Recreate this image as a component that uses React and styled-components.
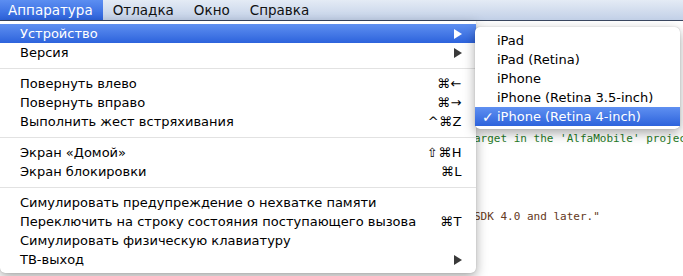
import React from 'react';
import styled, { createGlobalStyle } from 'styled-components';

const GlobalStyle = createGlobalStyle`
  html, body {
    margin: 0;
    padding: 0;
    background: #ffffff;
    overflow: hidden;
  }
`;

// only the part of Prefix.pch that shows to the right of the menu
const codeLines = [
  { text: '', kind: 'plain' },
  { text: "arget in the 'AlfaMobile' project", kind: 'comment' },
  { text: '', kind: 'plain' },
  { text: '', kind: 'plain' },
  { text: '', kind: 'plain' },
  { text: '', kind: 'plain' },
  { text: '', kind: 'plain' },
  { text: 'SDK 4.0 and later."', kind: 'pre' },
];

const mainItems = [
  { label: 'Устройство', submenu: true, active: true },
  { label: 'Версия', submenu: true },
  { divider: true },
  { label: 'Повернуть влево', shortcut: '⌘←' },
  { label: 'Повернуть вправо', shortcut: '⌘→' },
  { label: 'Выполнить жест встряхивания', shortcut: '^⌘Z' },
  { divider: true },
  { label: 'Экран «Домой»', shortcut: '⇧⌘H' },
  { label: 'Экран блокировки', shortcut: '⌘L' },
  { divider: true },
  { label: 'Симулировать предупреждение о нехватке памяти' },
  { label: 'Переключить на строку состояния поступающего вызова', shortcut: '⌘T' },
  { label: 'Симулировать физическую клавиатуру' },
  { label: 'ТВ-выход', submenu: true },
];

const devices = [
  { label: 'iPad' },
  { label: 'iPad (Retina)' },
  { label: 'iPhone' },
  { label: 'iPhone (Retina 3.5-inch)' },
  { label: 'iPhone (Retina 4-inch)', checked: true },
];

const Arrow = ({ light }) => (
  <svg width="8" height="10" viewBox="0 0 8 10">
    <polygon points="0,0 8,5 0,10" fill={light ? '#ffffff' : '#3a3a3a'} />
  </svg>
);

export default function App() {
  return (
    <Screen>
      <GlobalStyle />
      <MenuBar>
        <MenuTitle $active $first>Аппаратура</MenuTitle>
        <MenuTitle>Отладка</MenuTitle>
        <MenuTitle>Окно</MenuTitle>
        <MenuTitle>Справка</MenuTitle>
      </MenuBar>

      <Editor>
        {codeLines.map((line, i) => (
          <CodeLine key={i} $kind={line.kind}>{line.text || ' '}</CodeLine>
        ))}
      </Editor>

      <DropMenu>
        {mainItems.map((item, i) =>
          item.divider ? (
            <Divider key={i} />
          ) : (
            <MenuRow key={i} $active={item.active}>
              <span>{item.label}</span>
              {item.shortcut && <Shortcut>{item.shortcut}</Shortcut>}
              {item.submenu && <Arrow light={item.active} />}
            </MenuRow>
          )
        )}
      </DropMenu>

      <SubMenu>
        {devices.map((d) => (
          <SubRow key={d.label} $active={d.checked}>
            <CheckSlot>{d.checked ? '✓' : ''}</CheckSlot>
            {d.label}
          </SubRow>
        ))}
      </SubMenu>
    </Screen>
  );
}

const Screen = styled.div`
  position: relative;
  width: 683px;
  height: 276px;
  overflow: hidden;
  background: #ffffff;
  font-family: "DejaVu Sans", "Noto Sans", sans-serif;
`;

const MenuBar = styled.div`
  display: flex;
  align-items: stretch;
  height: 20px;
  border-bottom: 1px solid #3a4760;
  background: linear-gradient(#e4ebf5, #c2d0e7);
`;

const MenuTitle = styled.div`
  display: flex;
  align-items: center;
  padding: 0 10px 0 ${({ $first }) => ($first ? '8px' : '10px')};
  font-size: 13.5px;
  color: ${({ $active }) => ($active ? '#ffffff' : '#111111')};
  background: ${({ $active }) => ($active ? 'linear-gradient(#5c8ef1, #2c62dc)' : 'transparent')};
`;

const Editor = styled.div`
  padding: 98px 0 0 474px;
  font-family: "DejaVu Sans Mono", "Liberation Mono", monospace;
  font-size: 11px;
  line-height: 13px;
`;

const CodeLine = styled.div`
  white-space: pre;
  color: ${({ $kind }) => ($kind === 'comment' ? '#1f7a1f' : $kind === 'pre' ? '#643820' : '#000000')};
`;

const DropMenu = styled.div`
  position: absolute;
  top: 21px;
  left: 0;
  width: 476px;
  padding: 3px 0 4px;
  background: #ffffff;
  border-radius: 0 0 5px 5px;
  box-shadow: 0 4px 12px rgba(0, 0, 0, 0.35), 0 0 1px rgba(0, 0, 0, 0.3);
  font-size: 13px;
`;

const MenuRow = styled.div`
  display: flex;
  align-items: center;
  justify-content: space-between;
  height: 19px;
  padding: 0 14px 0 20px;
  color: ${({ $active }) => ($active ? '#ffffff' : '#000000')};
  background: ${({ $active }) => ($active ? 'linear-gradient(#5f90f1, #2d63dc)' : 'transparent')};
`;

const Shortcut = styled.span`
  letter-spacing: 0.5px;
`;

const Divider = styled.div`
  height: 1px;
  margin: 6px 0 5px;
  background: #e2e2e2;
`;

const SubMenu = styled.div`
  position: absolute;
  top: 27px;
  left: 475px;
  width: 205px;
  padding: 4px 0 3px;
  background: #ffffff;
  border-radius: 5px;
  box-shadow: 0 4px 12px rgba(0, 0, 0, 0.35), 0 0 1px rgba(0, 0, 0, 0.3);
  font-size: 13px;
`;

const SubRow = styled.div`
  display: flex;
  align-items: center;
  height: 19px;
  padding-left: 7px;
  color: ${({ $active }) => ($active ? '#ffffff' : '#000000')};
  background: ${({ $active }) => ($active ? 'linear-gradient(#5f90f1, #2d63dc)' : 'transparent')};
`;

const CheckSlot = styled.span`
  width: 15px;
  font-size: 14px;
  font-weight: bold;
`;
